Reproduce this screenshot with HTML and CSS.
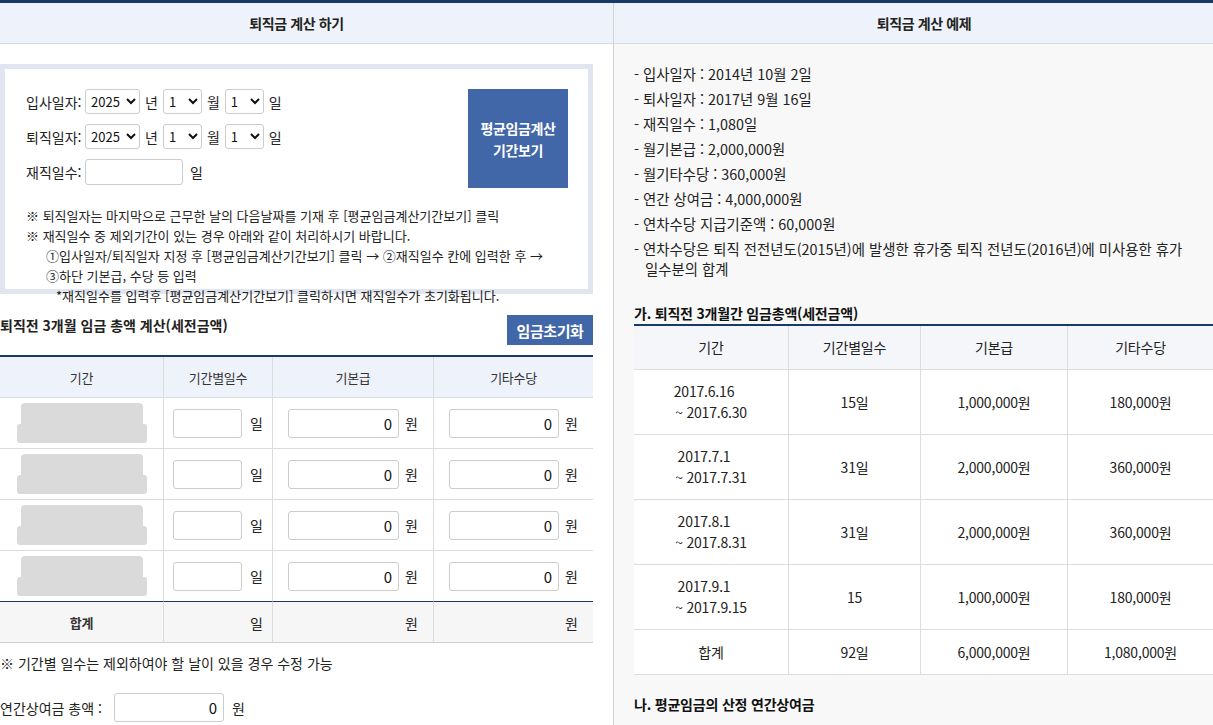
FILE: index.html
```html
<!DOCTYPE html>
<html lang="ko">
<head>
<meta charset="utf-8">
<title>퇴직금 계산</title>
<link rel="stylesheet" href="styles.css">
</head>
<body>
<div class="page">
  <section class="col col-left">
    <h2 class="col-head">퇴직금 계산 하기</h2>
    <div class="col-body">
      <div class="input-box">
        <div class="date-area">
          <div class="fields">
            <div class="field-row">
              <span class="lbl">입사일자:</span>
              <select class="sel sel-year"><option>2025</option></select><span class="unit">년</span>
              <select class="sel sel-md"><option>1</option></select><span class="unit">월</span>
              <select class="sel sel-md"><option>1</option></select><span class="unit">일</span>
            </div>
            <div class="field-row">
              <span class="lbl">퇴직일자:</span>
              <select class="sel sel-year"><option>2025</option></select><span class="unit">년</span>
              <select class="sel sel-md"><option>1</option></select><span class="unit">월</span>
              <select class="sel sel-md"><option>1</option></select><span class="unit">일</span>
            </div>
            <div class="field-row">
              <span class="lbl">재직일수:</span>
              <input class="inp inp-days" type="text"><span class="unit">일</span>
            </div>
          </div>
          <button class="btn btn-period" type="button">평균임금계산<br>기간보기</button>
        </div>
        <div class="notes">
          <p>※ 퇴직일자는 마지막으로 근무한 날의 다음날짜를 기재 후 [평균임금계산기간보기] 클릭</p>
          <p>※ 재직일수 중 제외기간이 있는 경우 아래와 같이 처리하시기 바랍니다.</p>
          <p class="sub">①입사일자/퇴직일자 지정 후 [평균임금계산기간보기] 클릭 → ②재직일수 칸에 입력한 후 →</p>
          <p class="sub">③하단 기본급, 수당 등 입력</p>
          <p class="sub2">*재직일수를 입력후 [평균임금계산기간보기] 클릭하시면 재직일수가 초기화됩니다.</p>
        </div>
      </div>

      <div class="sec-head">
        <h3 class="sec-title">퇴직전 3개월 임금 총액 계산(세전금액)</h3>
        <button class="btn btn-reset" type="button">임금초기화</button>
      </div>

      <table class="calc">
        <colgroup><col class="c1"><col class="c2"><col class="c3"><col class="c4"></colgroup>
        <thead>
          <tr><th>기간</th><th>기간별일수</th><th>기본급</th><th>기타수당</th></tr>
        </thead>
        <tbody>
          <tr>
            <td><div class="ph"><span class="ph-a"></span><span class="ph-b"></span></div></td>
            <td><input class="inp inp-day" type="text"><span class="u">일</span></td>
            <td><input class="inp inp-won" type="text" value="0"><span class="u">원</span></td>
            <td><input class="inp inp-won" type="text" value="0"><span class="u">원</span></td>
          </tr>
          <tr>
            <td><div class="ph"><span class="ph-a"></span><span class="ph-b"></span></div></td>
            <td><input class="inp inp-day" type="text"><span class="u">일</span></td>
            <td><input class="inp inp-won" type="text" value="0"><span class="u">원</span></td>
            <td><input class="inp inp-won" type="text" value="0"><span class="u">원</span></td>
          </tr>
          <tr>
            <td><div class="ph"><span class="ph-a"></span><span class="ph-b"></span></div></td>
            <td><input class="inp inp-day" type="text"><span class="u">일</span></td>
            <td><input class="inp inp-won" type="text" value="0"><span class="u">원</span></td>
            <td><input class="inp inp-won" type="text" value="0"><span class="u">원</span></td>
          </tr>
          <tr>
            <td><div class="ph"><span class="ph-a"></span><span class="ph-b"></span></div></td>
            <td><input class="inp inp-day" type="text"><span class="u">일</span></td>
            <td><input class="inp inp-won" type="text" value="0"><span class="u">원</span></td>
            <td><input class="inp inp-won" type="text" value="0"><span class="u">원</span></td>
          </tr>
        </tbody>
        <tfoot>
          <tr>
            <td>합계</td>
            <td><span class="sum-day"></span><span class="u">일</span></td>
            <td><span class="sum-won"></span><span class="u">원</span></td>
            <td><span class="sum-won"></span><span class="u">원</span></td>
          </tr>
        </tfoot>
      </table>

      <p class="tbl-note">※ 기간별 일수는 제외하여야 할 날이 있을 경우 수정 가능</p>

      <div class="bonus-row">
        <span class="lbl">연간상여금 총액 :</span>
        <input class="inp inp-bonus" type="text" value="0"><span class="u">원</span>
      </div>
    </div>
  </section>

  <section class="col col-right">
    <h2 class="col-head">퇴직금 계산 예제</h2>
    <div class="col-body">
      <ul class="ex-list">
        <li>- 입사일자 : 2014년 10월 2일</li>
        <li>- 퇴사일자 : 2017년 9월 16일</li>
        <li>- 재직일수 : 1,080일</li>
        <li>- 월기본급 : 2,000,000원</li>
        <li>- 월기타수당 : 360,000원</li>
        <li>- 연간 상여금 : 4,000,000원</li>
        <li>- 연차수당 지급기준액 : 60,000원</li>
        <li>- 연차수당은 퇴직 전전년도(2015년)에 발생한 휴가중 퇴직 전년도(2016년)에 미사용한 휴가 일수분의 합계</li>
      </ul>

      <h3 class="ex-title">가. 퇴직전 3개월간 임금총액(세전금액)</h3>
      <table class="ex-table">
        <colgroup><col class="e1"><col class="e2"><col class="e3"><col class="e4"></colgroup>
        <thead>
          <tr><th>기간</th><th>기간별일수</th><th>기본급</th><th>기타수당</th></tr>
        </thead>
        <tbody>
          <tr><td><span class="d1">2017.6.16</span><br><span class="d2">~ 2017.6.30</span></td><td>15일</td><td>1,000,000원</td><td>180,000원</td></tr>
          <tr><td><span class="d1">2017.7.1</span><br><span class="d2">~ 2017.7.31</span></td><td>31일</td><td>2,000,000원</td><td>360,000원</td></tr>
          <tr><td><span class="d1">2017.8.1</span><br><span class="d2">~ 2017.8.31</span></td><td>31일</td><td>2,000,000원</td><td>360,000원</td></tr>
          <tr><td><span class="d1">2017.9.1</span><br><span class="d2">~ 2017.9.15</span></td><td>15</td><td>1,000,000원</td><td>180,000원</td></tr>
          <tr class="sum"><td>합계</td><td>92일</td><td>6,000,000원</td><td>1,080,000원</td></tr>
        </tbody>
      </table>

      <h3 class="ex-title ex-title2">나. 평균임금의 산정 연간상여금</h3>
    </div>
  </section>
</div>
</body>
</html>
```

FILE: styles.css
```css
* { box-sizing: border-box; }

html, body {
  margin: 0;
  padding: 0;
  overflow: hidden;
  background: #ffffff;
}

body {
  font-family: "Noto Sans CJK KR", "Noto Sans", sans-serif;
  font-size: 13px;
  color: #333333;
}

h2, h3, p, ul { margin: 0; padding: 0; }

.page {
  display: grid;
  grid-template-columns: 633px 621px;
  margin-left: -20px;
  width: 1254px;
  border-top: 3px solid #173a66;
  height: 725px;
}

.col-head {
  height: 41px;
  line-height: 40px;
  background: #eef2fa;
  border-bottom: 1px solid #d6d9df;
  text-align: center;
  font-size: 14px;
  font-weight: 700;
  color: #222222;
  letter-spacing: -0.4px;
}

.col-body {
  padding: 0 20px;
}

.col-right {
  border-left: 1px solid #d2d2d2;
  background: #f8f8f8;
}

/* ---------- input box ---------- */
.input-box {
  margin-top: 20px;
  height: 230px;
  border: 5px solid #e1e5f0;
  padding: 20px 20px 0 21px;
}

.date-area {
  display: flex;
  justify-content: space-between;
  align-items: flex-start;
}

.fields {
  display: flex;
  flex-direction: column;
  gap: 10px;
}

.field-row {
  display: flex;
  align-items: center;
  height: 25px;
  gap: 4px;
  font-size: 14px;
  color: #222222;
}

.field-row:last-child { height: 26px; }

.field-row .lbl { width: 55px; white-space: nowrap; }

.sel {
  height: 25px;
  border: 1px solid #cccccc;
  border-radius: 3px;
  background: #ffffff;
  font-family: "Noto Sans CJK KR", "Noto Sans", sans-serif;
  font-size: 13px;
  color: #111111;
  padding: 0 0 0 1px;
}

.sel-year { width: 55px; }
.sel-md { width: 39px; }

.unit { margin: 0 1px; }

.inp {
  border: 1px solid #cccccc;
  border-radius: 3px;
  background: #ffffff;
  font-family: "Noto Sans CJK KR", "Noto Sans", sans-serif;
  font-size: 15px;
  color: #111111;
  padding: 0 6px;
  outline: none;
}

.inp-days { width: 98px; height: 26px; margin-right: 2px; }

.btn {
  border: none;
  background: #4267a8;
  color: #ffffff;
  font-family: "Noto Sans CJK KR", "Noto Sans", sans-serif;
  font-weight: 700;
  cursor: pointer;
  letter-spacing: -0.4px;
}

.btn-period {
  width: 100px;
  height: 99px;
  font-size: 14px;
  line-height: 22px;
  padding: 0;
}

.notes {
  margin-top: 18px;
  line-height: 20px;
  color: #222222;
}

.notes .sub { padding-left: 20px; }
.notes .sub2 { padding-left: 30px; }

/* ---------- section head ---------- */
.sec-head {
  display: flex;
  justify-content: space-between;
  align-items: flex-start;
  margin-top: 21px;
}

.sec-title {
  font-size: 14px;
  font-weight: 700;
  color: #222222;
  line-height: 20px;
}

.btn-reset {
  width: 86px;
  height: 30px;
  font-size: 15px;
  padding: 0;
}

/* ---------- calc table ---------- */
.calc {
  margin-top: 10px;
  width: 593px;
  border-collapse: separate;
  border-spacing: 0;
  border-top: 2px solid #173a66;
  table-layout: fixed;
}

.calc .c1 { width: 163px; }
.calc .c2 { width: 109px; }
.calc .c3 { width: 161px; }
.calc .c4 { width: 160px; }

.calc th,
.calc td {
  padding: 0;
  text-align: center;
  vertical-align: middle;
  border-bottom: 1px solid #dcdcdc;
  border-left: 1px solid #dcdcdc;
  white-space: nowrap;
}

.calc th:first-child,
.calc td:first-child { border-left: none; }

.calc th {
  height: 41px;
  background: #eef2fa;
  font-weight: 400;
  font-size: 13px;
  color: #333333;
  letter-spacing: -0.3px;
}

.calc tbody td { height: 51px; }

.calc tbody tr:last-child td { border-bottom: 1px solid #173a66; }

.calc tfoot td {
  height: 41px;
  background: #f6f6f6;
  border-bottom: 1px solid #cfcfcf;
}

.calc tfoot td:first-child { font-weight: 700; letter-spacing: -0.3px; }

.ph {
  display: flex;
  flex-direction: column;
  align-items: center;
}

.ph-a {
  display: block;
  width: 122px;
  height: 21px;
  background: #dadada;
  border-radius: 4px 4px 0 0;
}

.ph-b {
  display: block;
  width: 130px;
  height: 19px;
  background: #dadada;
  border-radius: 3px;
}

.inp-day { width: 69px; height: 29px; vertical-align: middle; }
.inp-won { width: 111px; height: 29px; text-align: right; vertical-align: middle; }
.calc td:nth-child(4) .inp-won { width: 110px; }

.u {
  display: inline-block;
  margin-left: 8px;
  vertical-align: middle;
  color: #222222;
  font-size: 14px;
}

.calc td:nth-child(3) .u,
.calc td:nth-child(4) .u { margin-left: 6px; }

.sum-day { display: inline-block; width: 69px; }
.sum-won { display: inline-block; width: 111px; }
.calc tfoot td:nth-child(4) .sum-won { width: 110px; }

.tbl-note {
  margin-top: 10px;
  line-height: 20px;
  font-size: 14px;
  color: #222222;
}

.bonus-row {
  display: flex;
  align-items: center;
  margin-top: 20px;
  font-size: 14px;
  color: #222222;
}

.bonus-row .lbl { width: 114px; white-space: nowrap; }
.inp-bonus { width: 110px; height: 29px; text-align: right; }
.bonus-row .u { margin-left: 8px; }

/* ---------- right column ---------- */
.ex-list {
  list-style: none;
  padding-top: 20px;
  line-height: 20px;
  font-size: 14.4px;
  color: #222222;
  word-break: keep-all;
}

.ex-list li {
  margin-bottom: 5px;
  padding-left: 11px;
  text-indent: -11px;
}

.ex-title {
  margin-top: 24px;
  font-size: 14px;
  font-weight: 700;
  line-height: 20px;
  color: #111111;
  letter-spacing: -0.2px;
}

.ex-title2 { margin-top: 19px; }

.ex-table {
  margin-top: 1px;
  width: 579px;
  border-collapse: separate;
  border-spacing: 0;
  border-top: 2px solid #173a66;
  table-layout: fixed;
  font-size: 14px;
  color: #222222;
  letter-spacing: -0.2px;
}

.ex-table .e1 { width: 154px; }
.ex-table .e2 { width: 132px; }
.ex-table .e3 { width: 147px; }
.ex-table .e4 { width: 146px; }

.ex-table th,
.ex-table td {
  padding: 0;
  text-align: center;
  vertical-align: middle;
  border-bottom: 1px solid #dddddd;
  border-left: 1px solid #dddddd;
  line-height: 21px;
}

.ex-table th:first-child,
.ex-table td:first-child { border-left: none; }

.ex-table th {
  height: 44px;
  background: #f4f6fa;
  font-weight: 400;
  font-size: 14px;
}

.ex-table td {
  height: 65px;
  background: #ffffff;
}

.ex-table tr.sum td { height: 45px; }

.ex-table .d1 { margin-right: 14px; }
```
